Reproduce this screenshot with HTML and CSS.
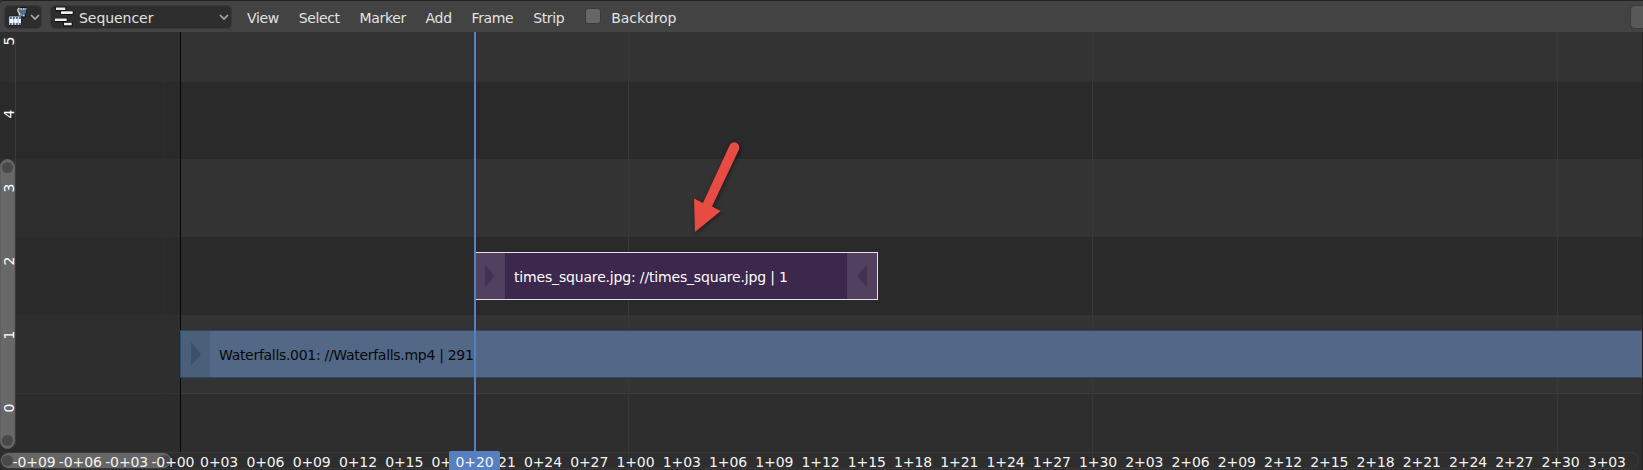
FILE: index.html
```
<!DOCTYPE html>
<html lang="en">
<head>
<meta charset="utf-8">
<title>Sequencer</title>
<link rel="stylesheet" href="styles.css">
</head>
<body>
<div class="editor">
  <header class="header">
    <div class="scene-select">
      <svg class="scene-icon" width="20" height="20" viewBox="0 0 20 20">
        <path d="M10.500 .5Q8.500 2.500 10 5L8.500 10H16.500Q15.500 7 17.500 5.500V.5Z" fill="#54718e" stroke="#151515"/>
        <path d="M11.500 2H17.500M11.500 8.500H16" stroke="#c5d2df" stroke-width="1.300" stroke-dasharray="1.500 1"/>
        <path d="M10.500 1Q7.500 3 10 5.500Q11.500 8 9.500 11" fill="none" stroke="#d8d8d8" stroke-width="1.500"/>
        <path d="M-.3 9H12.500V18.500H-.3Z" fill="#f4f4f4" stroke="#222"/>
        <path d="M.8 11H12M.8 17H12" stroke="#3d6da8" stroke-width="1.800" stroke-dasharray="2 1"/>
        <path d="M4.500 12V16M9 12V16" stroke="#a9bdd3"/>
      </svg>
      <svg class="chevron" width="10" height="7" viewBox="0 0 10 7"><path d="M1 1L5 5L9 1"/></svg>
    </div>
    <div class="mode-select">
      <svg class="mode-icon" width="20" height="20" viewBox="0 0 20 20">
        <g fill="none" stroke="#121212" stroke-width="4.400"><path d="M.3 2H11.300M5.300 5.900H18.700M0 13H12.700M8.300 17.300H17.700"/></g>
        <g fill="none" stroke="#ececec" stroke-width="2.600"><path d="M1 1.700H10.300M6 5.600H17.700M0 12.700H11.700M9 17H16.700"/></g>
      </svg>
      <span class="mode-name">Sequencer</span>
      <svg class="chevron" width="10" height="7" viewBox="0 0 10 7"><path d="M1 1L5 5L9 1"/></svg>
    </div>
    <nav class="menus"><span>View</span><span>Select</span><span>Marker</span><span>Add</span><span>Frame</span><span>Strip</span></nav>
    <span class="checkbox"></span><span class="check-label">Backdrop</span>
    <span class="header-end"></span>
  </header>
  <main class="canvas">
    <div class="rows">
      <div class="row first"></div><div class="row dark"></div><div class="row"></div><div class="row dark"></div><div class="row"></div><div class="row base"></div>
    </div>
    <div class="preroll"></div>
    <i class="gridline g0"></i><i class="gridline g1"></i><i class="gridline g2"></i><i class="gridline g3"></i>
    <i class="start-line"></i>
    <div class="strip movie">
      <span class="handle"><svg width="10" height="24"><path d="M0 0L10 12L0 24Z"/></svg></span>
      <span class="strip-name">Waterfalls.001: //Waterfalls.mp4 | 291</span>
    </div>
    <div class="strip image">
      <span class="handle"><svg width="10" height="22"><path d="M0 0L9.500 11L0 22Z"/></svg></span>
      <span class="strip-name">times_square.jpg: //times_square.jpg | 1</span>
      <span class="handle"><svg width="10" height="22"><path d="M10 0L0 11L10 22Z"/></svg></span>
    </div>
    <div class="vscroll">
      <div class="vthumb"><i></i><i></i></div>
      <div class="channels"><b>5</b><b>4</b><b>3</b><b>2</b><b>1</b><b>0</b></div>
    </div>
    <div class="ruler">
      <div class="hthumb"><i></i><i></i></div>
      <div class="times"><span>-0+09</span><span>-0+06</span><span>-0+03</span><span>-0+00</span><span>0+03</span><span>0+06</span><span>0+09</span><span>0+12</span><span>0+15</span><span>0+18</span><span>0+21</span><span>0+24</span><span>0+27</span><span>1+00</span><span>1+03</span><span>1+06</span><span>1+09</span><span>1+12</span><span>1+15</span><span>1+18</span><span>1+21</span><span>1+24</span><span>1+27</span><span>1+30</span><span>2+03</span><span>2+06</span><span>2+09</span><span>2+12</span><span>2+15</span><span>2+18</span><span>2+21</span><span>2+24</span><span>2+27</span><span>2+30</span><span>3+03</span></div>
    </div>
    <div class="playhead"></div>
    <div class="frame-tag">0+20</div>
    <svg class="arrow" width="60" height="100" viewBox="0 0 60 100"><path d="M40 14.500Q43 11 46.800 13Q50.500 15.500 49 19.500L22 76.500L30.800 81L5 102L4 68.500L13 73Z"/></svg>
    <div class="edge"></div>
  </main>
</div>
</body>
</html>
```
FILE: styles.css
```
* { box-sizing: border-box; }
body { margin: 0; background: #2e2e2e; }
.editor { width: 1643px; height: 470px; overflow: hidden; display: flex; flex-direction: column; font: 14px/18px "DejaVu Sans", sans-serif; color: #e2e2e2; }
.header { height: 32px; flex: none; display: flex; align-items: flex-start; background: #434343; border-top: 1px solid #222; border-top-left-radius: 4px; padding: 4px 0 0 4px; }
.scene-select, .mode-select { height: 24px; background: #2d2d2d; border: 1px solid #393939; border-radius: 5px; display: flex; align-items: center; }
.scene-select { width: 38px; padding-left: 4px; gap: 1px; }
.mode-select { width: 182px; margin-left: 8px; padding: 0 2px 0 4px; }
.scene-icon { overflow: visible; }
.mode-icon { overflow: visible; }
.mode-name { flex: 1; padding: 2px 0 0 4px; letter-spacing: -.05px; }
.chevron { fill: none; stroke: #aaa; stroke-width: 1.700; }
.menus { display: flex; gap: 19.800px; padding: 4px 0 0 15px; letter-spacing: -.35px; }
.checkbox { width: 16px; height: 16px; margin: 3px 0 0 21px; background: #666; border: 1px solid #3a3a3a; border-radius: 3px; }
.check-label { padding: 4px 0 0 10px; letter-spacing: -.1px; }
.header-end { margin-left: auto; width: 13px; height: 24px; background: #585858; border: 1px solid #3a3a3a; border-right: 0; border-radius: 5px 0 0 5px; }
.canvas { flex: 1; position: relative; }
.rows { display: flex; flex-direction: column; height: 438px; }
.row { height: 78px; background: #333; }
.row.first { height: 50px; }
.row.dark { background: #2a2a2a; }
.row.dark:nth-child(2) { height: 77px; }
.row.base { flex: 1; background: #2e2e2e; border-top: 1px solid #3c3c3c; }
.preroll { position: absolute; left: 0; top: 0; width: 180px; height: 438px; background: rgba(42,42,42,.5); }
.gridline { position: absolute; top: 0; bottom: 0; width: 1px; background: #383838; }
.g0 { left: 164px; background: #2d2d2d; } .g1 { left: 628px; } .g2 { left: 1092px; } .g3 { left: 1557px; }
.start-line { position: absolute; left: 180px; top: 0; width: 1px; height: 420px; background: #050505; }
.strip { position: absolute; display: flex; align-items: stretch; white-space: nowrap; }
.strip-name { flex: 1; align-self: center; }
.handle { width: 30px; display: flex; align-items: center; justify-content: center; }
.movie { left: 180px; top: 298px; width: 1462px; height: 48px; background: #526886; border: 1px solid #2c4767; border-right: 0; color: #080808; }
.movie .handle { width: 29px; background: #4a6079; fill: #3d5068; }
.movie .strip-name { padding: 2px 0 0 9px; letter-spacing: -.3px; }
.image { left: 474px; top: 220px; width: 404px; height: 48px; background: #3c274d; border: 1px solid #eadcf5; color: #fff; }
.image .handle { background: #524061; fill: #423150; }
.image .strip-name { padding: 1px 0 0 9px; letter-spacing: -.17px; }
.vscroll { position: absolute; left: 0; top: 2px; width: 16px; height: 416px; border-right: 1px solid #3b3b3b; border-radius: 0 8px 8px 0; }
.vthumb { position: absolute; left: 0; top: 125px; width: 15px; height: 290px; background: #686868; border: 1px solid #606060; border-radius: 8px; display: flex; flex-direction: column; justify-content: space-between; padding: 2px 1px; }
.vthumb i, .hthumb i { width: 11px; height: 11px; border-radius: 50%; background: #494949; }
.channels { position: absolute; left: 0; top: -2.500px; width: 18px; display: flex; flex-direction: column; gap: 55.500px; color: #fff; }
.channels b { font-weight: normal; height: 18px; width: 18px; text-align: center; transform: rotate(-90deg); }
.ruler { position: absolute; left: 0; top: 420px; width: 1639px; height: 17px; border: 1px solid #393939; border-radius: 8px; }
.hthumb { position: absolute; left: 0; top: 0; width: 170px; height: 15px; background: #666; border-radius: 8px; display: flex; justify-content: space-between; align-items: center; padding: 0 1px; }
.times { position: absolute; left: 10px; top: 0; width: 1619px; display: grid; grid-template-columns: repeat(35, 1fr); color: #f4f4f4; letter-spacing: -.1px; }
.times span { display: flex; justify-content: center; white-space: nowrap; }
.playhead { position: absolute; left: 474px; top: 0; width: 2px; height: 420px; background: #5680c2; }
.frame-tag { position: absolute; left: 449px; top: 419px; width: 51px; height: 19px; padding-top: 2px; background: #5680c2; border-radius: 2px 2px 0 0; text-align: center; color: #f4f4f4; letter-spacing: -.1px; }
.arrow { position: absolute; left: 690px; top: 97.500px; overflow: visible; fill: #e84b43; filter: drop-shadow(1px 1px 2px rgba(0,0,0,.5)); }
.edge { position: absolute; right: 0; top: 0; width: 1px; height: 438px; background: #222; }
```
